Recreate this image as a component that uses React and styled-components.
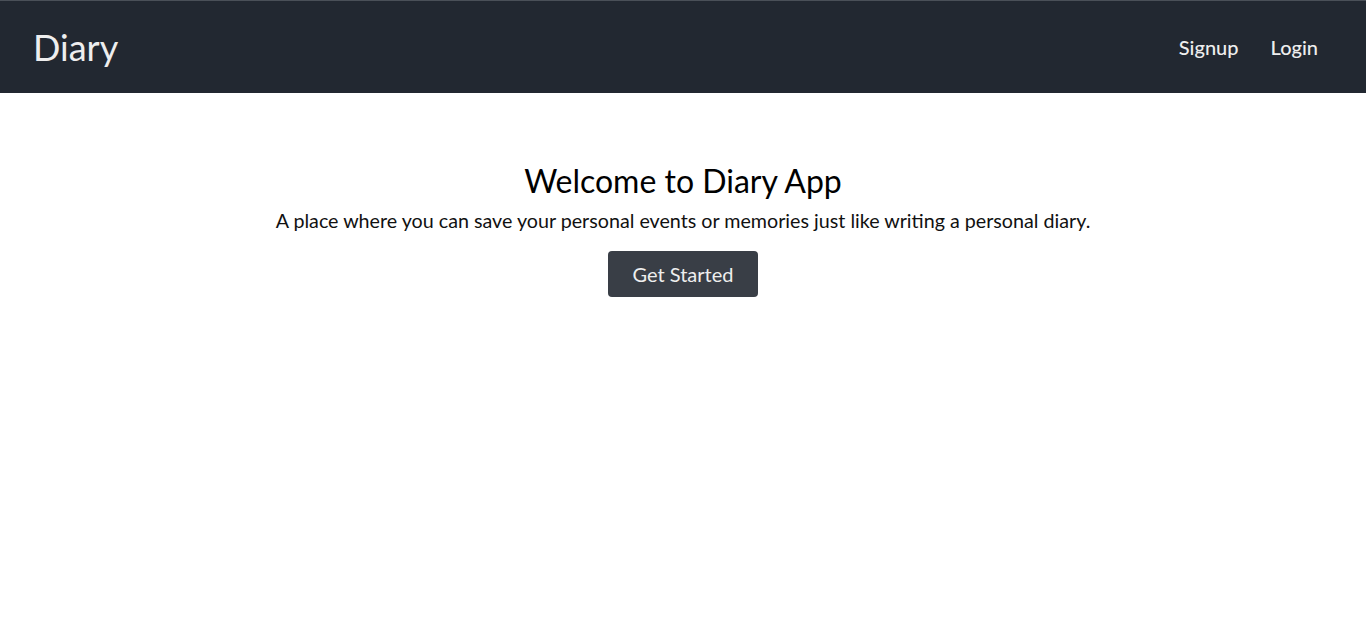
import styled, { createGlobalStyle } from 'styled-components';

const GlobalStyle = createGlobalStyle`
  body {
    margin: 0;
    background: #ffffff;
    font-family: Lato, "Open Sans", sans-serif;
  }
`;

export default function App() {
  return (
    <>
      <GlobalStyle />
      <Navbar>
        <Brand>Diary</Brand>
        <NavLinks>
          <NavLink>Signup</NavLink>
          <NavLink>Login</NavLink>
        </NavLinks>
      </Navbar>
      <Hero>
        <Title>Welcome to Diary App</Title>
        <Lead>
          A place where you can save your personal events or memories just like
          writing a personal diary.
        </Lead>
        <StartButton>Get Started</StartButton>
      </Hero>
    </>
  );
}

const Navbar = styled.nav`
  height: 92px;
  border-top: 1px solid #4a5058;
  background: #222831;
  display: flex;
  align-items: center;
  justify-content: space-between;
  padding: 0 48px 0 33px;
`;

const Brand = styled.span`
  color: #eeeeee;
  font-size: 36px;
  font-weight: 400;
`;

const NavLinks = styled.div`
  display: flex;
  gap: 32px;
`;

const NavLink = styled.span`
  color: #eeeeee;
  font-size: 20px;
  font-weight: 500;
  cursor: pointer;
`;

const Hero = styled.main`
  display: flex;
  flex-direction: column;
  align-items: center;
  padding-top: 68px;
`;

const Title = styled.h1`
  margin: 0;
  color: #000;
  font-size: 32px;
  font-weight: 400;
  line-height: 40px;
`;

const Lead = styled.p`
  margin: 8px 0 0;
  color: #111;
  font-size: 19.7px;
  line-height: 24px;
`;

const StartButton = styled.button`
  margin-top: 18px;
  width: 150px;
  height: 46px;
  border: none;
  border-radius: 4px;
  background: #393e46;
  color: #eeeeee;
  font-family: Lato, sans-serif;
  font-size: 20px;
`;
